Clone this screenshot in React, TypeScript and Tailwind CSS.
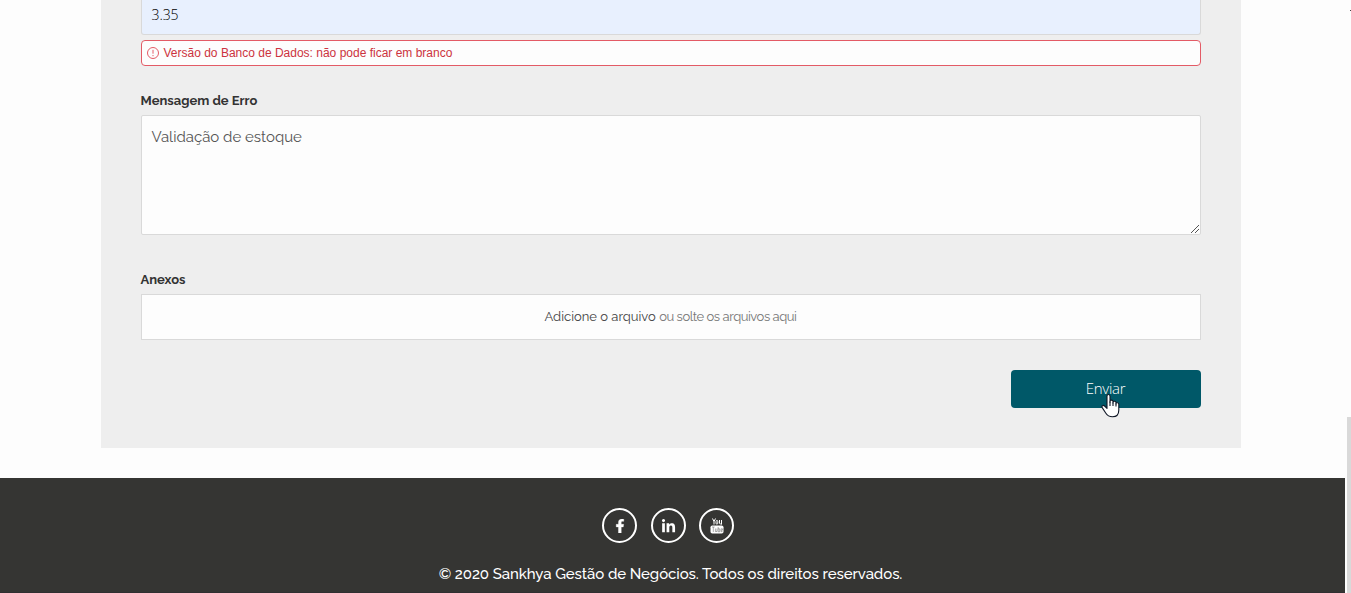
import { FaFacebookF, FaLinkedinIn } from "react-icons/fa";

const copyright = "© 2020 Sankhya Gestão de Negócios. Todos os direitos reservados.";

function YoutubeIcon() {
  return (
    <svg viewBox="0 0 14 16" className="mt-px h-4 w-3.5">
      <g fill="none" stroke="#fff" strokeWidth="1">
        <path d="M2.5 0.5L4 3.5L5.5 0.5M4 3.5V6.5" />
        <rect x="6" y="2.5" width="1.8" height="3.6" rx="0.9" />
        <path d="M9.5 2V5.2Q9.5 6 10.4 6L11.5 5.2M11.5 2V6.6" />
      </g>
      <rect x="0.5" y="7.5" width="13" height="8" rx="1.8" fill="#fff" />
      <g fill="none" stroke="#353533" strokeWidth="0.4">
        <path d="M2 9H4.6M3.3 9V14" />
        <path d="M5.4 10.5V13.5H7V10.5" />
        <path d="M8.2 9V13.8H9.7V10.8H8.2" />
        <path d="M12.5 13.6H11V10.8H12.5V12.2H11" />
      </g>
    </svg>
  );
}

const socialLinks = [
  { label: "Facebook", icon: <FaFacebookF className="h-3.5 w-3.5" stroke="#fff" strokeWidth="14" />, className: "" },
  { label: "LinkedIn", icon: <FaLinkedinIn className="mr-px mt-0.5 h-[15px] w-[15px]" />, className: "ml-3.5" },
  { label: "YouTube", icon: <YoutubeIcon />, className: "ml-[13px]" },
];

function ErrorMessage() {
  return (
    <div className="mt-[5px] flex h-[26px] items-center rounded-[4px] border border-[#e35b66] bg-[#fdfdfd] pl-[5px] font-['Liberation_Sans',sans-serif] text-[12px] text-[#cc3340]">
      <svg viewBox="0 0 12 12" className="mr-[4.5px] h-3 w-3 shrink-0" fill="none" stroke="#e35b66">
        <circle cx="6" cy="6" r="5.5" />
        <path d="M6 2.8V6.7M6 8V9.2" />
      </svg>
      <span className="whitespace-nowrap">
        Versão do Banco de Dados: não pode ficar em branco
      </span>
    </div>
  );
}

function PointerCursor() {
  return (
    <svg
      viewBox="0 0 19 25"
      className="pointer-events-none absolute left-[90px] top-[23px] h-[25px] w-[19px]"
      fill="#fff"
      stroke="#111827"
      strokeWidth="1.1"
      strokeLinejoin="round"
    >
      <path d="M6 15V3.2C6 1 9 1 9 3.2V9.2V8.4C9 6.6 12 6.8 12 8.6V10V9.3C12 7.8 15 8 15 9.6V11V10.5C15 9.3 17.8 9.4 17.8 11.2V17C17.8 21.5 15.2 23.8 11.5 23.8C8 23.8 6.2 22.5 4.7 20L1.2 14.6C.2 12.8 2.3 11.8 3.6 13L6 15.4Z" />
      <path d="M9 8.5V13M12 9.5V13M15 10.5V13.5" />
    </svg>
  );
}

export default function App() {
  return (
    <div className="relative h-[593px] w-full overflow-hidden bg-[#fdfdfd] font-[Raleway,Lato,sans-serif]">
      <main className="ml-[101px] h-[448px] w-[1140px] bg-[#eeeeee] px-10">
        <div className="flex h-[35px] rounded-b-[3px] border border-t-0 border-[#d9d9d9] bg-[#e8f0fe] pl-[9.5px] pt-[5px]">
          <span className="font-['Open_Sans',sans-serif] text-[14px] font-light leading-5 tracking-[-0.1px] text-black">
            3.35
          </span>
        </div>
        <ErrorMessage />

        <label className="mt-6 block h-[25px] text-[13px] font-bold leading-[21px] text-[#333]">
          <span className="ml-[-0.5px]">Mensagem de Erro</span>
        </label>
        <div className="flex h-[120px] flex-col justify-between rounded-[2px] border border-[#d9d9d9] bg-[#fdfdfd] pl-[9.5px] pt-[11px]">
          <span className="text-[15px] leading-5 text-[#555]">Validação de estoque</span>
          <svg viewBox="0 0 10 10" className="h-2.5 w-2.5 self-end" stroke="#555" strokeWidth="1">
            <path d="M1 9L9 1M5 9L9 5" />
          </svg>
        </div>

        <label className="mt-[34px] block h-[25px] text-[13px] font-bold leading-[21px] text-[#333]">
          <span className="ml-[-0.5px]">Anexos</span>
        </label>
        <div className="flex h-[46px] items-baseline justify-center border border-[#d9d9d9] bg-[#fdfdfd] pr-px pt-3 text-[13px] leading-5">
          <span className="whitespace-pre text-[#444]">Adicione o arquivo </span>
          <span className="tracking-[-0.45px] text-[#777]">ou solte os arquivos aqui</span>
        </div>

        <div className="mt-[30px] flex justify-end">
          <button className="relative h-[38px] w-[190px] rounded-[4px] bg-[#005868] pb-0.5 pr-px font-['Open_Sans',sans-serif] text-[15px] font-light text-white">
            <span className="tracking-[-0.25px]">Enviar</span>
            <PointerCursor />
          </button>
        </div>
      </main>

      <footer className="mt-[30px] flex h-[115px] w-[1345px] flex-col items-center border-b border-[#302f31] bg-[#353533] pt-[30px] text-white">
        <div className="mr-[9px] flex">
          {socialLinks.map((link) => (
            <a
              key={link.label}
              aria-label={link.label}
              className={`flex h-[35px] w-[35px] items-center justify-center rounded-full border-2 border-white ${link.className}`}
            >
              {link.icon}
            </a>
          ))}
        </div>
        <p className="ml-[-4px] mt-[20px] whitespace-nowrap text-[15px] font-medium leading-[22px] tracking-[-0.08px]">
          {copyright}
        </p>
      </footer>

      {/* scrollbar thumb */}
      <div className="absolute bottom-0 right-0 h-[176px] w-1 bg-[#d9d9d9]" />
      <div className="absolute right-0 top-[10px] h-px w-px bg-[#444]" />
    </div>
  );
}
